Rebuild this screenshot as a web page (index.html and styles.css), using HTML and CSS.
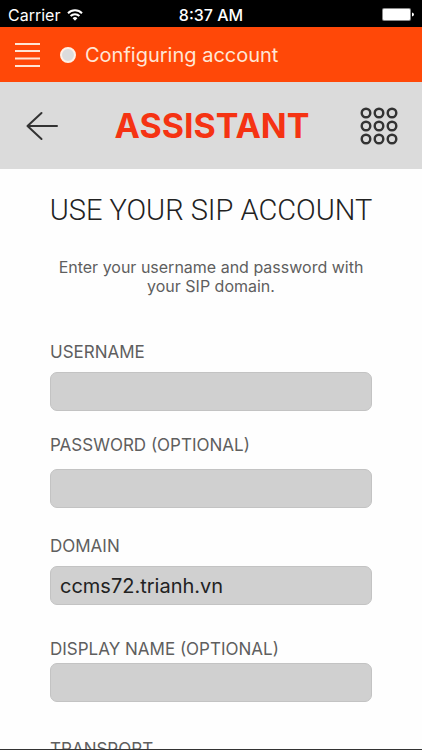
FILE: index.html
```html
<!DOCTYPE html>
<html lang="en">
<head>
    <meta charset="UTF-8">
    <meta name="viewport" content="width=device-width, initial-scale=1.0">
    <title>Assistant - SIP account</title>
    <link rel="stylesheet" href="styles.css">
</head>
<body>
    <div class="app">
        <div class="status-bar">
            <div class="carrier">
                <span>Carrier</span>
                <svg class="wifi" width="16" height="12" viewBox="0 0 16 12" fill="none" stroke="#fff" stroke-width="2">
                    <path d="M1 4.2a10 10 0 0 1 14 0"/>
                    <path d="M3.6 7a6.2 6.2 0 0 1 8.8 0"/>
                    <path d="M8 11.8L5.6 9.3a3.4 3.4 0 0 1 4.8 0z" fill="#fff" stroke="none"/>
                </svg>
            </div>
            <div class="time">8:37 AM</div>
            <div class="power">
                <svg width="32" height="13" viewBox="0 0 32 13" fill="#fff">
                    <rect x="0" y="0" width="29" height="13" rx="2" fill="#8a8a8a"/>
                    <rect x="1" y="1" width="27" height="11" rx="1"/>
                    <path d="M30 4.5q2 .6 2 2t-2 2z"/>
                </svg>
            </div>
        </div>

        <header class="account-bar">
            <button class="menu-btn" type="button" aria-label="Menu">
                <svg width="25" height="26" viewBox="0 0 25 26" fill="none" stroke="#ffe6d5" stroke-width="2">
                    <path d="M0 2h25M0 9h25M0 16.500h25M0 24h25"/>
                </svg>
            </button>
            <span class="dot"></span>
            <span class="account-state">Configuring account</span>
        </header>

        <nav class="title-bar">
            <button class="nav-btn" type="button" aria-label="Back">
                <svg width="32" height="30" viewBox="0 0 32 30" fill="none" stroke="#333" stroke-width="2" stroke-linecap="round" stroke-linejoin="round">
                    <path d="M15.500 2L1.500 15l14 13M1.500 15H31"/>
                </svg>
            </button>
            <h1 class="page-title">ASSISTANT</h1>
            <button class="nav-btn" type="button" aria-label="Dialer">
                <svg width="38" height="38" viewBox="0 0 38 38" fill="none" stroke="#333" stroke-width="2.400">
                    <circle cx="6" cy="6" r="4.300"/><circle cx="19" cy="6" r="4.300"/><circle cx="32" cy="6" r="4.300"/>
                    <circle cx="6" cy="19" r="4.300"/><circle cx="19" cy="19" r="4.300"/><circle cx="32" cy="19" r="4.300"/>
                    <circle cx="6" cy="32" r="4.300"/><circle cx="19" cy="32" r="4.300"/><circle cx="32" cy="32" r="4.300"/>
                </svg>
            </button>
        </nav>

        <main class="content">
            <h2 class="heading">USE YOUR SIP ACCOUNT</h2>
            <p class="hint">Enter your username and password with your SIP domain.</p>

            <form class="sip-form">
                <div class="field">
                    <label for="username">USERNAME</label>
                    <input type="text" id="username">
                </div>
                <div class="field field-loose">
                    <label for="password">PASSWORD (OPTIONAL)</label>
                    <input type="password" id="password">
                </div>
                <div class="field">
                    <label for="domain">DOMAIN</label>
                    <input type="text" id="domain" value="ccms72.trianh.vn">
                </div>
                <div class="field field-tight">
                    <label for="display-name">DISPLAY NAME (OPTIONAL)</label>
                    <input type="text" id="display-name">
                </div>
                <div class="field field-flush">
                    <label for="transport">TRANSPORT</label>
                    <select id="transport">
                        <option>UDP</option>
                        <option>TCP</option>
                        <option>TLS</option>
                    </select>
                </div>
            </form>
        </main>
    </div>
</body>
</html>
```
FILE: styles.css
```css
* {
    margin: 0;
    padding: 0;
    box-sizing: border-box;
}

body {
    background-color: #fefefe;
    font-family: Inter, "Liberation Sans", sans-serif;
    color: #5f5f5f;
}

button {
    display: flex;
    background: none;
    border: none;
    cursor: pointer;
}

.app {
    display: flex;
    flex-direction: column;
    height: 100vh;
    overflow: hidden;
    border-bottom: 1px solid #333;
}

/* phone status bar */
.status-bar {
    display: flex;
    align-items: center;
    flex-shrink: 0;
    padding: 2px 8px 0;
    height: 27px;
    background: #000;
    color: #fff;
    font-size: 16px;
}

.carrier,
.power {
    display: flex;
    align-items: center;
    flex: 1;
    gap: 7px;
}

.power {
    justify-content: flex-end;
}

.time {
    font-weight: 500;
}

/* account state */
.account-bar {
    display: flex;
    align-items: center;
    flex-shrink: 0;
    height: 55px;
    padding: 0 15px;
    background: #ff4808;
    color: #ffe6d5;
}

.dot {
    width: 16px;
    height: 16px;
    margin: 0 9px 0 20px;
    border: 2px solid #fff0e6;
    border-radius: 50%;
    background: #dcdcdc;
}

.account-state {
    font-size: 20px;
}

.title-bar {
    display: flex;
    align-items: center;
    justify-content: space-between;
    flex-shrink: 0;
    height: 87px;
    padding: 0 24px 0 26px;
    background: #dbdbdb;
}

.nav-btn {
    width: 38px;
}

.page-title {
    font-size: 34px;
    font-weight: 700;
    color: #f53313;
}

/* form */
.content {
    padding: 23px 50px 0;
}

.heading {
    margin: 0 -20px;
    font-family: Roboto, Inter, sans-serif;
    font-size: 29px;
    line-height: 36px;
    font-weight: 300;
    text-align: center;
    color: #222;
}

.hint {
    margin-top: 30px;
    font-size: 16px;
    line-height: 19px;
    text-align: center;
}

.sip-form {
    margin-top: 18px;
}

.field {
    display: flex;
    flex-direction: column;
    justify-content: flex-end;
    gap: 10px;
    height: 97px;
}

.field-loose {
    gap: 14px;
}

.field-tight {
    gap: 4px;
}

.field-flush {
    gap: 1px;
}

.field label {
    font-size: 17px;
    line-height: 20px;
}

.field input,
.field select {
    width: 100%;
    height: 39px;
    padding: 0 9px;
    border: 1px solid #c3c3c3;
    border-radius: 7px;
    background: #d0d0d0;
    font-family: inherit;
    font-size: 20px;
    color: #222;
    outline: none;
}
```
